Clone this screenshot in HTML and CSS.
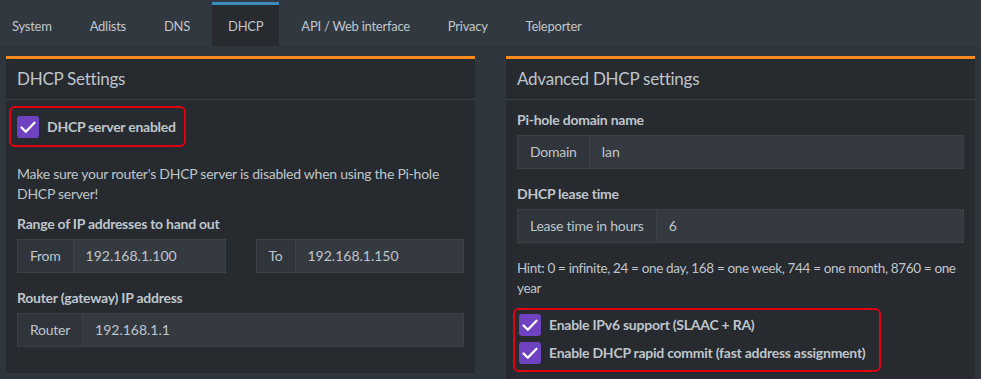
FILE: index.html
```html
<!DOCTYPE html>
<html lang="en">
<head>
    <meta charset="UTF-8">
    <meta name="viewport" content="width=device-width, initial-scale=1.0">
    <title>Pi-hole - Settings - DHCP</title>
    <link rel="stylesheet" href="styles.css">
</head>

<body>
    <!-- Settings tabs -->
    <nav class="tabs">
        <a class="tab" href="#system">System</a>
        <a class="tab" href="#adlists">Adlists</a>
        <a class="tab" href="#dns">DNS</a>
        <a class="tab active" href="#dhcp">DHCP</a>
        <a class="tab" href="#api">API / Web interface</a>
        <a class="tab" href="#privacy">Privacy</a>
        <a class="tab" href="#teleporter">Teleporter</a>
    </nav>

    <div class="panels">
        <!-- Basic DHCP settings -->
        <section class="box">
            <div class="box-header">
                <h3>DHCP Settings</h3>
            </div>
            <div class="box-body">
                <div class="highlight highlight-left">
                    <label class="check">
                        <span class="check-box">
                            <svg viewBox="0 0 22 22" width="22" height="22"><polyline points="4.5,11.5 8.8,15.8 17.5,6.8" /></svg>
                        </span>
                        DHCP server enabled
                    </label>
                </div>

                <p class="note">Make sure your router's DHCP server is disabled when using the Pi-hole DHCP server!</p>

                <label class="field-label">Range of IP addresses to hand out</label>
                <div class="row">
                    <div class="input-group">
                        <span class="addon">From</span>
                        <input type="text" value="192.168.1.100">
                    </div>
                    <div class="input-group">
                        <span class="addon">To</span>
                        <input type="text" value="192.168.1.150">
                    </div>
                </div>

                <label class="field-label">Router (gateway) IP address</label>
                <div class="input-group">
                    <span class="addon">Router</span>
                    <input type="text" value="192.168.1.1">
                </div>
            </div>
        </section>

        <!-- Advanced DHCP settings -->
        <section class="box">
            <div class="box-header">
                <h3>Advanced DHCP settings</h3>
            </div>
            <div class="box-body box-body-right">
                <label class="field-label">Pi-hole domain name</label>
                <div class="input-group form-group">
                    <span class="addon">Domain</span>
                    <input type="text" value="lan">
                </div>

                <label class="field-label">DHCP lease time</label>
                <div class="input-group form-group">
                    <span class="addon">Lease time in hours</span>
                    <input type="text" value="6">
                </div>

                <p class="hint">Hint: 0 = infinite, 24 = one day, 168 = one week, 744 = one month, 8760 = one year</p>

                <div class="highlight highlight-right">
                    <label class="check">
                        <span class="check-box">
                            <svg viewBox="0 0 22 22" width="22" height="22"><polyline points="4.5,11.5 8.8,15.8 17.5,6.8" /></svg>
                        </span>
                        Enable IPv6 support (SLAAC + RA)
                    </label>
                    <label class="check">
                        <span class="check-box">
                            <svg viewBox="0 0 22 22" width="22" height="22"><polyline points="4.5,11.5 8.8,15.8 17.5,6.8" /></svg>
                        </span>
                        Enable DHCP rapid commit (fast address assignment)
                    </label>
                </div>
            </div>
        </section>
    </div>
</body>
</html>
```

FILE: styles.css
```css
:root {
    --page-bg: #2f353c;
    --tabbar-bg: #32383f;
    --box-bg: #272b30;
    --text-color: #bfc5cb;
    --border-color: #3b4148;
    --input-bg: #353a41;
    --addon-bg: #30353b;
    --accent-blue: #3c8dbc;
    --accent-orange: #fa8a1b;
    --check-purple: #6f42c1;
    --highlight-red: #e0000f;
}

* {
    margin: 0;
    padding: 0;
    box-sizing: border-box;
}

body {
    font-family: Lato, 'Liberation Sans', sans-serif;
    font-size: 14px;
    line-height: 20px;
    letter-spacing: -0.25px;
    background-color: var(--page-bg);
    color: var(--text-color);
}

/* Tabs */
.tabs {
    display: flex;
    height: 46px;
    padding-top: 2px;
    background-color: var(--tabbar-bg);
}

.tab {
    display: flex;
    align-items: center;
    padding: 1px 16px 0;
    margin-right: 6px;
    border-top: 3px solid transparent;
    color: var(--text-color);
    font-size: 13px;
    text-decoration: none;
}

.tab:first-child {
    margin-left: -4px;
}

.tab.active {
    background-color: var(--box-bg);
    border-top-color: var(--accent-blue);
}

/* Boxes */
.panels {
    display: grid;
    grid-template-columns: minmax(0, 1fr) minmax(0, 1fr);
    gap: 31px;
    align-items: start;
    padding: 10px 6px 0;
}

.box {
    background-color: var(--box-bg);
    border-top: 3px solid var(--accent-orange);
}

.box-header {
    display: flex;
    align-items: center;
    height: 41px;
    padding: 0 11px;
    border-bottom: 1px solid var(--border-color);
}

.box-header h3 {
    font-size: 17px;
    font-weight: 400;
}

.box-body {
    padding: 6px 11px 26px;
}

.box-body-right {
    padding-top: 10px;
}

/* Checkboxes */
.highlight {
    display: inline-flex;
    flex-direction: column;
    gap: 6px;
    border: 2px solid var(--highlight-red);
    border-radius: 6px;
}

.highlight-left {
    margin-left: -8px;
    padding: 8px 8px 7px 6px;
}

.highlight-right {
    margin-top: 10px;
    margin-left: -4px;
    padding: 4px 14px 6px 4px;
}

.check {
    display: flex;
    align-items: center;
    gap: 8px;
    font-weight: 700;
    white-space: nowrap;
}

.check-box {
    display: flex;
    flex-shrink: 0;
    width: 22px;
    height: 22px;
    border-radius: 3px;
    background-color: var(--check-purple);
}

.check-box polyline {
    fill: none;
    stroke: #fff;
    stroke-width: 2.3;
    stroke-linecap: round;
    stroke-linejoin: round;
}

/* Form fields */
.note {
    margin: 17px 0 10px;
}

.hint {
    margin-top: 15px;
    font-size: 13.5px;
    letter-spacing: -0.35px;
}

.field-label {
    display: block;
    margin-bottom: 5px;
    font-weight: 700;
}

.row {
    display: grid;
    grid-template-columns: minmax(0, 1fr) minmax(0, 1fr);
    gap: 30px;
    margin-bottom: 15px;
}

.form-group {
    margin-bottom: 15px;
}

.input-group {
    display: flex;
    height: 34px;
}

.addon {
    padding: 6px 12px;
    background-color: var(--addon-bg);
    border: 1px solid var(--border-color);
    border-right: none;
    white-space: nowrap;
}

.input-group input {
    flex: 1;
    width: 100%;
    min-width: 0;
    padding: 6px 12px;
    background-color: var(--input-bg);
    border: 1px solid var(--border-color);
    color: var(--text-color);
    font: inherit;
    outline: none;
}
```
